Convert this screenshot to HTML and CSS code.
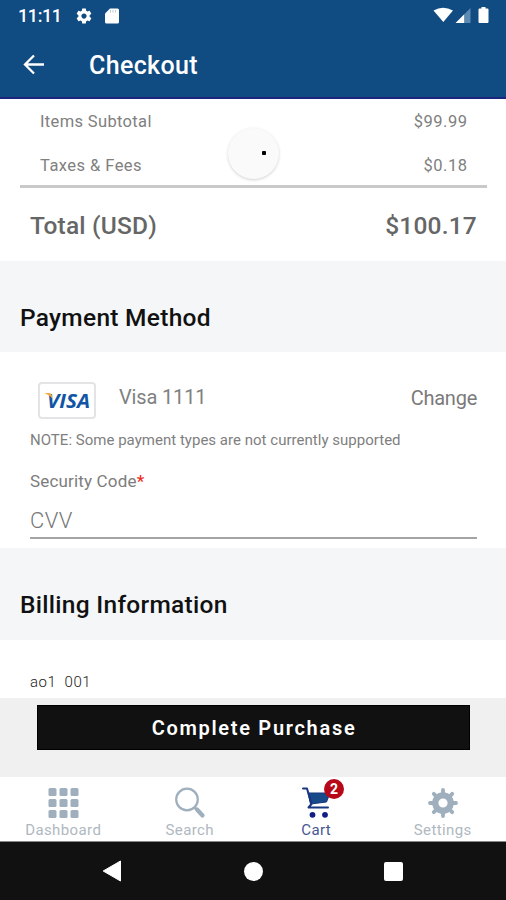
FILE: index.html
```html
<!DOCTYPE html>
<html lang="en">
<head>
<meta charset="utf-8">
<title>Checkout</title>
<link rel="stylesheet" href="styles.css">
</head>
<body>
<div class="screen">
  <header class="header">
    <div class="status">
      <span class="clock">11:11</span>
      <svg class="status-gear" width="18" height="18" viewBox="0 0 24 24"><path fill="#fff" d="M19.43 12.98c.04-.32.07-.64.07-.98s-.03-.66-.07-.98l2.11-1.65c.19-.15.24-.42.12-.64l-2-3.46c-.12-.22-.39-.3-.61-.22l-2.49 1c-.52-.4-1.08-.73-1.69-.98l-.38-2.65C14.46 2.18 14.25 2 14 2h-4c-.25 0-.46.18-.49.42l-.38 2.65c-.61.25-1.17.59-1.69.98l-2.49-1c-.23-.09-.49 0-.61.22l-2 3.46c-.13.22-.07.49.12.64l2.11 1.65c-.04.32-.07.65-.07.98s.03.66.07.98l-2.11 1.65c-.19.15-.24.42-.12.64l2 3.46c.12.22.39.3.61.22l2.49-1c.52.4 1.08.73 1.69.98l.38 2.65c.03.24.24.42.49.42h4c.25 0 .46-.18.49-.42l.38-2.65c.61-.25 1.17-.59 1.69-.98l2.49 1c.23.09.49 0 .61-.22l2-3.46c.12-.22.07-.49-.12-.64l-2.11-1.65zM12 15.5c-1.93 0-3.5-1.57-3.5-3.5s1.57-3.5 3.5-3.5 3.5 1.57 3.5 3.5-1.57 3.5-3.5 3.5z"/></svg>
      <svg class="status-card" width="14" height="16" viewBox="0 0 14 16"><path fill="#fff" d="M5 .5h7.500Q14 .5 14 2v12q0 1.500-1.500 1.500h-11Q0 15.500 0 14V5.500z"/><path stroke="#b9cbdc" stroke-width="1" d="M5.500 2v2.600M8 2v2.600M10.500 2v2.600"/></svg>
      <svg class="status-right" width="60" height="20" viewBox="0 0 60 20"><path fill="#fff" d="M.5 4.500Q10 -1 20 4.500L10.300 16z"/><path fill="#fff" d="M22.500 17L31.500 8v9z"/><path fill="#5c8ab2" d="M31.500 8L37.500 2v15h-6z"/><path fill="#fff" d="M48.500 1h4v1.500h2q1 0 1 1v12.500q0 1-1 1h-8q-1 0-1-1V3.500q0-1 1-1h2z"/></svg>
    </div>
    <div class="appbar">
      <svg width="24" height="22" viewBox="0 0 24 22"><path fill="none" stroke="#fff" stroke-width="2.300" d="M22 10.500H3M12 1.500l-9 9 9 9"/></svg>
      <h1 class="title">Checkout</h1>
    </div>
  </header>

  <section class="summary">
    <div class="row"><span class="items">Items Subtotal</span><span class="amount">$99.99</span></div>
    <div class="row second"><span class="taxes">Taxes &amp; Fees</span><span class="amount">$0.18</span></div>
    <div class="row total"><span class="total-label">Total (USD)</span><span class="total-amount">$100.17</span></div>
    <div class="spinner"><i></i></div>
  </section>

  <h2 class="section-title">Payment Method</h2>
  <section class="payment">
    <div class="method">
      <div class="visa"><svg width="48" height="28" viewBox="0 0 48 28"><text class="visa-text" x="4" y="22" textLength="43" lengthAdjust="spacingAndGlyphs">VISA</text><path fill="#f5a742" d="M1.500 7h5q1.600 0 2 1.600l1.200 4.500Q6.500 9 1.500 7z"/></svg></div>
      <span class="card-name">Visa 1111</span>
      <span class="change">Change</span>
    </div>
    <p class="note">NOTE: Some payment types are not currently supported</p>
    <p class="code"><span>Security Code</span><b>*</b></p>
    <div class="field">CVV</div>
  </section>

  <h2 class="section-title billing-title">Billing Information</h2>
  <section class="billing"><span>ao1&nbsp; 001</span></section>

  <div class="action"><div class="button"><span>Complete Purchase</span></div></div>

  <nav class="tabs">
    <div class="tab"><svg width="32" height="32" viewBox="0 0 32 32" fill="#9fafbd"><rect x="1.500" y="1" width="8" height="8" rx="1.500"/><rect x="12.500" y="1" width="8" height="8" rx="1.500"/><rect x="23.500" y="1" width="8" height="8" rx="1.500"/><rect x="1.500" y="12" width="8" height="8" rx="1.500"/><rect x="12.500" y="12" width="8" height="8" rx="1.500"/><rect x="23.500" y="12" width="8" height="8" rx="1.500"/><rect x="1.500" y="23" width="8" height="8" rx="1.500"/><rect x="12.500" y="23" width="8" height="8" rx="1.500"/><rect x="23.500" y="23" width="8" height="8" rx="1.500"/></svg><span>Dashboard</span></div>
    <div class="tab"><svg width="32" height="32" viewBox="0 0 32 32" fill="none" stroke="#9fafbd"><circle cx="13" cy="12.500" r="10.800" stroke-width="2.200"/><path stroke-width="2.500" d="M20 20l3 3"/><path stroke-width="4.200" stroke-linecap="round" d="M23 22.500l5.500 6"/></svg><span>Search</span></div>
    <div class="tab active"><svg width="32" height="32" viewBox="0 0 32 32"><path fill="#164a88" stroke="#173681" stroke-width="1" d="M8 6h22L26.500 15 10.500 17z"/><path fill="none" stroke="#173681" stroke-width="2" stroke-linecap="round" stroke-linejoin="round" d="M3 1.500h4L11.500 17l-3 3.500H28"/><circle cx="12.500" cy="27.800" r="2.900" fill="#111e87"/><circle cx="25" cy="27.800" r="2.900" fill="#111e87"/></svg><em class="badge">2</em><span>Cart</span></div>
    <div class="tab"><svg width="32" height="32" viewBox="0 0 32 32"><g fill="none" stroke="#9fafbd"><circle cx="16" cy="16" r="7.700" stroke-width="6.200"/><path stroke-width="3.800" stroke-linecap="round" d="M16 3V8M16 24v5M3 16H8M24 16h5M6.800 6.800l3 3M22.200 22.200l3 3M6.800 25.200l3-3M22.200 9.800l3-3"/></g></svg><span>Settings</span></div>
  </nav>

  <footer class="sysnav">
    <svg width="20" height="24" viewBox="0 0 20 24"><path fill="#fff" stroke="#fff" stroke-linejoin="round" d="M1.200 12L18.500 2v20z"/></svg>
    <i class="home"></i>
    <i class="recent"></i>
  </footer>
</div>
</body>
</html>
```
FILE: styles.css
```css
* { box-sizing: border-box; margin: 0; padding: 0; }
body { font-family: Roboto, "Liberation Sans", sans-serif; color: #6b6b6b; background: #fff; }
.screen { width: 506px; height: 900px; overflow: hidden; display: flex; flex-direction: column; white-space: nowrap; }
.screen > * { flex: none; }
svg { display: block; flex: none; }

.header { height: 99px; background: #104b82; border-bottom: 2px solid #1c267f; color: #fff; }
.status { height: 31px; display: flex; align-items: center; padding: 0 13px 0 18px; }
.clock { width: 57px; font-size: 18px; font-weight: 500; letter-spacing: -.4px; }
.status-gear { margin-right: 12px; }
.status-right { margin-left: auto; }
.appbar { height: 68px; display: flex; align-items: center; padding: 0 0 0 22px; }
.title { margin: 2px 0 0 43px; font-size: 25px; line-height: 30px; font-weight: 500; letter-spacing: .35px; }

.summary { height: 162px; position: relative; padding: 0 19px 0 20px; }
.row { display: flex; justify-content: space-between; align-items: center; height: 44px; padding: 0 20px; font-size: 16.500px; color: #808080; }
.items { letter-spacing: .35px; }
.taxes { letter-spacing: .45px; }
.amount { letter-spacing: .5px; margin-right: -.5px; }
.row.second { height: 45px; padding-top: 2px; border-bottom: 3px solid #c9c9c9; }
.row.total { height: 74px; padding: 0 10px; font-weight: 500; font-size: 24.500px; letter-spacing: .2px; color: #666; }
.spinner { position: absolute; left: 228px; top: 29px; width: 51px; height: 51px; border-radius: 50%; background: #fafafa; box-shadow: 0 1px 3px rgba(0,0,0,.18); display: flex; align-items: center; justify-content: flex-end; padding: 0 13px 2px 0; }
.spinner i { width: 4px; height: 4px; border-radius: 1px; background: #000; }

.section-title { height: 91px; background: #f4f6f8; padding: 42px 20px 0; line-height: 30px; font-size: 24.500px; letter-spacing: .28px; font-weight: 500; color: #111; }
.payment { height: 196px; padding: 30px 29px 0 30px; }
.method { display: flex; height: 38px; padding-left: 8px; }
.visa { width: 58px; height: 37px; border: 2px solid #e4e4e6; border-radius: 4px; padding: 2px 3px; }
.visa-text { font: italic 700 20px "Open Sans", "Liberation Sans", sans-serif; fill: #1155a4; }
.card-name { margin-left: 23px; line-height: 30px; font-size: 20px; letter-spacing: -.15px; color: #808080; }
.change { margin-left: auto; line-height: 32px; font-size: 20px; letter-spacing: -.25px; color: #7a7a7a; }
.note { margin-top: 9px; height: 22px; line-height: 22px; font-size: 15px; letter-spacing: .02px; color: #808080; }
.code { margin-top: 19px; height: 22px; line-height: 22px; font-size: 17px; letter-spacing: .17px; color: #7d7d7d; display: flex; }
.code b { font-weight: 500; color: #ee2d24; }
.field { margin-top: 13px; height: 34px; line-height: 32px; border-bottom: 2px solid #a4a4a4; font-size: 22px; font-weight: 300; letter-spacing: .5px; color: #777; }
.billing-title { height: 92px; }
.billing { height: 58px; padding: 31px 30px 0; line-height: 22px; font-size: 15px; letter-spacing: .5px; font-weight: 300; color: #222; }

.action { height: 79px; background: #f0f0f0; padding: 7px 36px 0 37px; }
.button { height: 45px; background: #111; border: 1px solid #000; color: #fff; display: flex; align-items: center; justify-content: center; padding-left: 1px; font-size: 20px; font-weight: 600; letter-spacing: 1.700px; }

.tabs { height: 65px; display: grid; grid-template-columns: repeat(4, 1fr); border-bottom: 1px solid #888; }
.tab { position: relative; display: flex; flex-direction: column; align-items: center; padding-top: 10px; font-size: 15px; line-height: 20px; letter-spacing: .4px; color: #b0b8bf; }
.tab span { margin-top: 1px; }
.tab.active { color: #485693; }
.badge { position: absolute; left: 71px; top: 2px; width: 20px; height: 20px; border-radius: 50%; background: #b60819; color: #fff; text-align: center; font: 700 14px/20px Roboto, sans-serif; letter-spacing: 0; }
.sysnav { height: 58px; background: #111; display: flex; align-items: center; padding-left: 102px; }
.home { width: 19px; height: 19px; border-radius: 50%; background: #fff; margin-left: 122px; }
.recent { width: 19px; height: 19px; border-radius: 2px; background: #fff; margin-left: 121px; }
```
